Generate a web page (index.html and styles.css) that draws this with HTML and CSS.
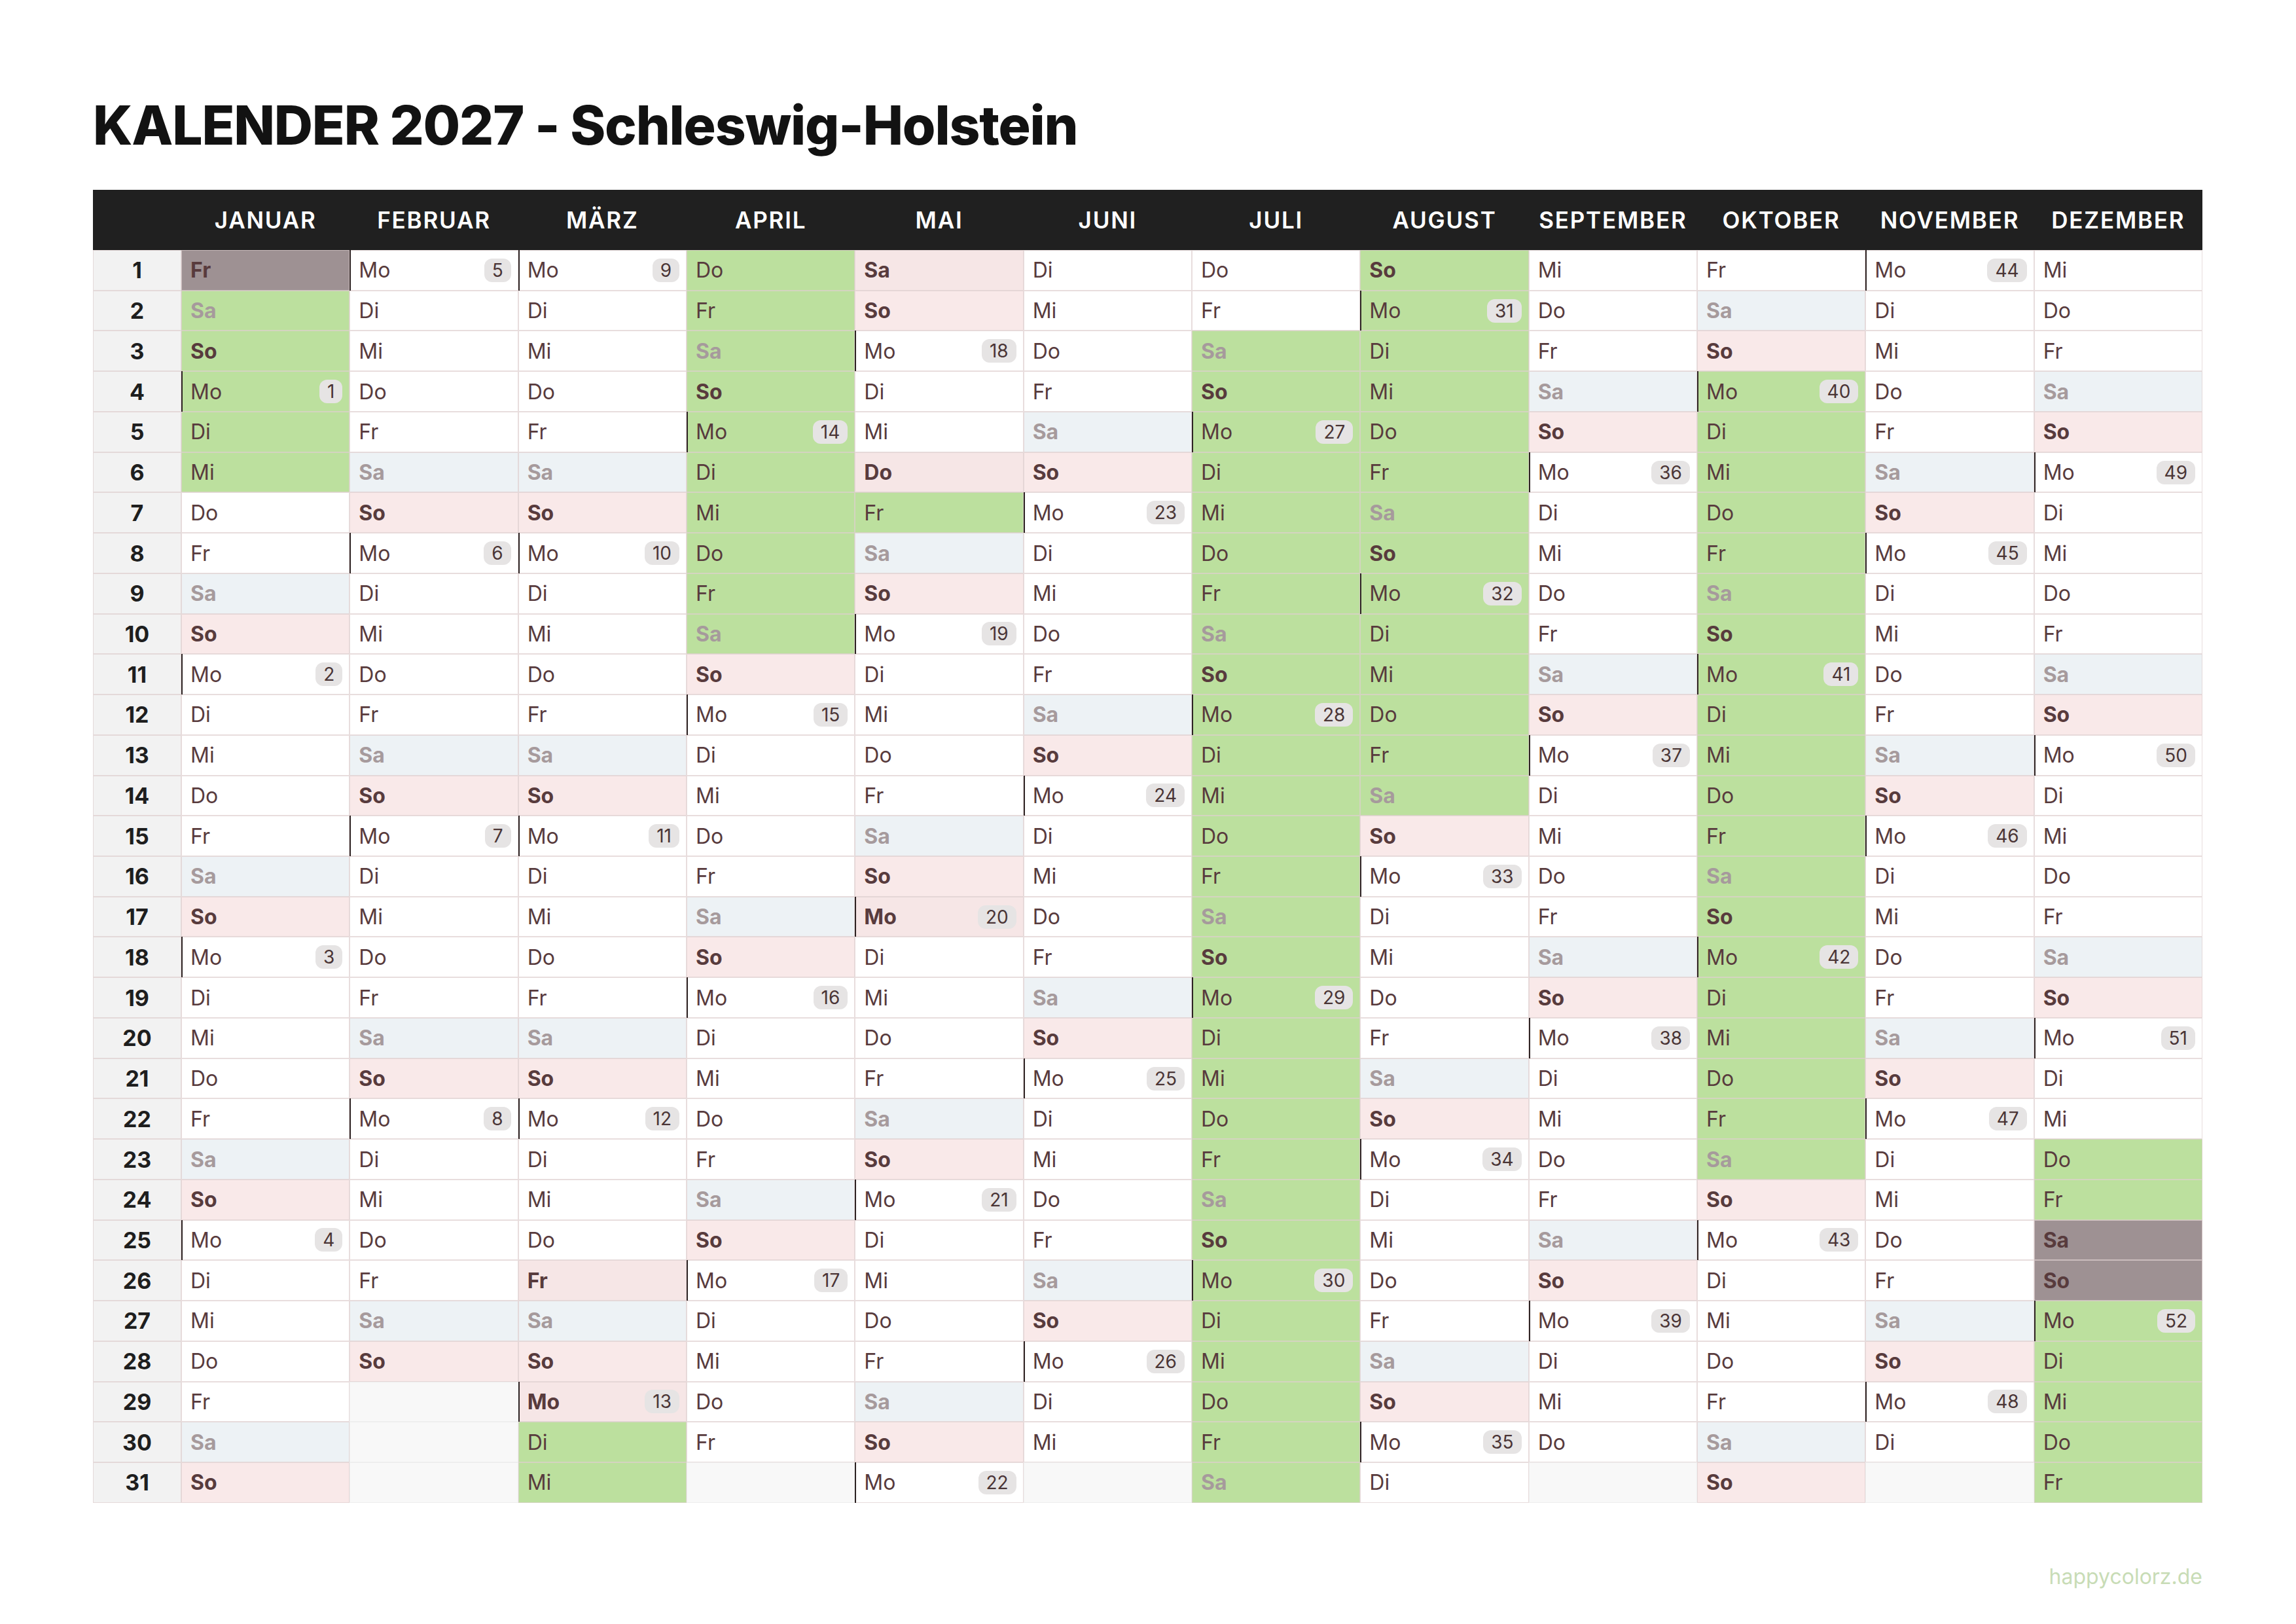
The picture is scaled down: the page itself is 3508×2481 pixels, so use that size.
FILE: index.html
```html
<!DOCTYPE html>
<html lang="de">
<head>
<meta charset="utf-8">
<title>Kalender 2027 - Schleswig-Holstein</title>
<link rel="stylesheet" href="styles.css">
</head>
<body>
<main class="page">
<h1 class="title">KALENDER 2027 - Schleswig-Holstein</h1>
<div class="cal">
<div class="h"></div>
<div class="n">1</div><div class="n">2</div><div class="n">3</div><div class="n">4</div><div class="n">5</div><div class="n">6</div><div class="n">7</div><div class="n">8</div><div class="n">9</div><div class="n">10</div><div class="n">11</div><div class="n">12</div><div class="n">13</div><div class="n">14</div><div class="n">15</div><div class="n">16</div><div class="n">17</div><div class="n">18</div><div class="n">19</div><div class="n">20</div><div class="n">21</div><div class="n">22</div><div class="n">23</div><div class="n">24</div><div class="n">25</div><div class="n">26</div><div class="n">27</div><div class="n">28</div><div class="n">29</div><div class="n">30</div><div class="n">31</div>

<div class="h">JANUAR</div>
<div class="c hf">Fr</div>
<div class="c fe sa">Sa</div>
<div class="c fe so">So</div>
<div class="c fe mo">Mo<span class="wk">1</span></div>
<div class="c fe">Di</div>
<div class="c fe">Mi</div>
<div class="c">Do</div>
<div class="c">Fr</div>
<div class="c sa">Sa</div>
<div class="c so">So</div>
<div class="c mo">Mo<span class="wk">2</span></div>
<div class="c">Di</div>
<div class="c">Mi</div>
<div class="c">Do</div>
<div class="c">Fr</div>
<div class="c sa">Sa</div>
<div class="c so">So</div>
<div class="c mo">Mo<span class="wk">3</span></div>
<div class="c">Di</div>
<div class="c">Mi</div>
<div class="c">Do</div>
<div class="c">Fr</div>
<div class="c sa">Sa</div>
<div class="c so">So</div>
<div class="c mo">Mo<span class="wk">4</span></div>
<div class="c">Di</div>
<div class="c">Mi</div>
<div class="c">Do</div>
<div class="c">Fr</div>
<div class="c sa">Sa</div>
<div class="c so">So</div>

<div class="h">FEBRUAR</div>
<div class="c mo">Mo<span class="wk">5</span></div>
<div class="c">Di</div>
<div class="c">Mi</div>
<div class="c">Do</div>
<div class="c">Fr</div>
<div class="c sa">Sa</div>
<div class="c so">So</div>
<div class="c mo">Mo<span class="wk">6</span></div>
<div class="c">Di</div>
<div class="c">Mi</div>
<div class="c">Do</div>
<div class="c">Fr</div>
<div class="c sa">Sa</div>
<div class="c so">So</div>
<div class="c mo">Mo<span class="wk">7</span></div>
<div class="c">Di</div>
<div class="c">Mi</div>
<div class="c">Do</div>
<div class="c">Fr</div>
<div class="c sa">Sa</div>
<div class="c so">So</div>
<div class="c mo">Mo<span class="wk">8</span></div>
<div class="c">Di</div>
<div class="c">Mi</div>
<div class="c">Do</div>
<div class="c">Fr</div>
<div class="c sa">Sa</div>
<div class="c so">So</div>
<div class="c e"></div>
<div class="c e"></div>
<div class="c e"></div>

<div class="h">MÄRZ</div>
<div class="c mo">Mo<span class="wk">9</span></div>
<div class="c">Di</div>
<div class="c">Mi</div>
<div class="c">Do</div>
<div class="c">Fr</div>
<div class="c sa">Sa</div>
<div class="c so">So</div>
<div class="c mo">Mo<span class="wk">10</span></div>
<div class="c">Di</div>
<div class="c">Mi</div>
<div class="c">Do</div>
<div class="c">Fr</div>
<div class="c sa">Sa</div>
<div class="c so">So</div>
<div class="c mo">Mo<span class="wk">11</span></div>
<div class="c">Di</div>
<div class="c">Mi</div>
<div class="c">Do</div>
<div class="c">Fr</div>
<div class="c sa">Sa</div>
<div class="c so">So</div>
<div class="c mo">Mo<span class="wk">12</span></div>
<div class="c">Di</div>
<div class="c">Mi</div>
<div class="c">Do</div>
<div class="c ho">Fr</div>
<div class="c sa">Sa</div>
<div class="c so">So</div>
<div class="c ho mo">Mo<span class="wk">13</span></div>
<div class="c fe">Di</div>
<div class="c fe">Mi</div>

<div class="h">APRIL</div>
<div class="c fe">Do</div>
<div class="c fe">Fr</div>
<div class="c fe sa">Sa</div>
<div class="c fe so">So</div>
<div class="c fe mo">Mo<span class="wk">14</span></div>
<div class="c fe">Di</div>
<div class="c fe">Mi</div>
<div class="c fe">Do</div>
<div class="c fe">Fr</div>
<div class="c fe sa">Sa</div>
<div class="c so">So</div>
<div class="c mo">Mo<span class="wk">15</span></div>
<div class="c">Di</div>
<div class="c">Mi</div>
<div class="c">Do</div>
<div class="c">Fr</div>
<div class="c sa">Sa</div>
<div class="c so">So</div>
<div class="c mo">Mo<span class="wk">16</span></div>
<div class="c">Di</div>
<div class="c">Mi</div>
<div class="c">Do</div>
<div class="c">Fr</div>
<div class="c sa">Sa</div>
<div class="c so">So</div>
<div class="c mo">Mo<span class="wk">17</span></div>
<div class="c">Di</div>
<div class="c">Mi</div>
<div class="c">Do</div>
<div class="c">Fr</div>
<div class="c e"></div>

<div class="h">MAI</div>
<div class="c ho">Sa</div>
<div class="c so">So</div>
<div class="c mo">Mo<span class="wk">18</span></div>
<div class="c">Di</div>
<div class="c">Mi</div>
<div class="c ho">Do</div>
<div class="c fe">Fr</div>
<div class="c sa">Sa</div>
<div class="c so">So</div>
<div class="c mo">Mo<span class="wk">19</span></div>
<div class="c">Di</div>
<div class="c">Mi</div>
<div class="c">Do</div>
<div class="c">Fr</div>
<div class="c sa">Sa</div>
<div class="c so">So</div>
<div class="c ho mo">Mo<span class="wk">20</span></div>
<div class="c">Di</div>
<div class="c">Mi</div>
<div class="c">Do</div>
<div class="c">Fr</div>
<div class="c sa">Sa</div>
<div class="c so">So</div>
<div class="c mo">Mo<span class="wk">21</span></div>
<div class="c">Di</div>
<div class="c">Mi</div>
<div class="c">Do</div>
<div class="c">Fr</div>
<div class="c sa">Sa</div>
<div class="c so">So</div>
<div class="c mo">Mo<span class="wk">22</span></div>

<div class="h">JUNI</div>
<div class="c">Di</div>
<div class="c">Mi</div>
<div class="c">Do</div>
<div class="c">Fr</div>
<div class="c sa">Sa</div>
<div class="c so">So</div>
<div class="c mo">Mo<span class="wk">23</span></div>
<div class="c">Di</div>
<div class="c">Mi</div>
<div class="c">Do</div>
<div class="c">Fr</div>
<div class="c sa">Sa</div>
<div class="c so">So</div>
<div class="c mo">Mo<span class="wk">24</span></div>
<div class="c">Di</div>
<div class="c">Mi</div>
<div class="c">Do</div>
<div class="c">Fr</div>
<div class="c sa">Sa</div>
<div class="c so">So</div>
<div class="c mo">Mo<span class="wk">25</span></div>
<div class="c">Di</div>
<div class="c">Mi</div>
<div class="c">Do</div>
<div class="c">Fr</div>
<div class="c sa">Sa</div>
<div class="c so">So</div>
<div class="c mo">Mo<span class="wk">26</span></div>
<div class="c">Di</div>
<div class="c">Mi</div>
<div class="c e"></div>

<div class="h">JULI</div>
<div class="c">Do</div>
<div class="c">Fr</div>
<div class="c fe sa">Sa</div>
<div class="c fe so">So</div>
<div class="c fe mo">Mo<span class="wk">27</span></div>
<div class="c fe">Di</div>
<div class="c fe">Mi</div>
<div class="c fe">Do</div>
<div class="c fe">Fr</div>
<div class="c fe sa">Sa</div>
<div class="c fe so">So</div>
<div class="c fe mo">Mo<span class="wk">28</span></div>
<div class="c fe">Di</div>
<div class="c fe">Mi</div>
<div class="c fe">Do</div>
<div class="c fe">Fr</div>
<div class="c fe sa">Sa</div>
<div class="c fe so">So</div>
<div class="c fe mo">Mo<span class="wk">29</span></div>
<div class="c fe">Di</div>
<div class="c fe">Mi</div>
<div class="c fe">Do</div>
<div class="c fe">Fr</div>
<div class="c fe sa">Sa</div>
<div class="c fe so">So</div>
<div class="c fe mo">Mo<span class="wk">30</span></div>
<div class="c fe">Di</div>
<div class="c fe">Mi</div>
<div class="c fe">Do</div>
<div class="c fe">Fr</div>
<div class="c fe sa">Sa</div>

<div class="h">AUGUST</div>
<div class="c fe so">So</div>
<div class="c fe mo">Mo<span class="wk">31</span></div>
<div class="c fe">Di</div>
<div class="c fe">Mi</div>
<div class="c fe">Do</div>
<div class="c fe">Fr</div>
<div class="c fe sa">Sa</div>
<div class="c fe so">So</div>
<div class="c fe mo">Mo<span class="wk">32</span></div>
<div class="c fe">Di</div>
<div class="c fe">Mi</div>
<div class="c fe">Do</div>
<div class="c fe">Fr</div>
<div class="c fe sa">Sa</div>
<div class="c so">So</div>
<div class="c mo">Mo<span class="wk">33</span></div>
<div class="c">Di</div>
<div class="c">Mi</div>
<div class="c">Do</div>
<div class="c">Fr</div>
<div class="c sa">Sa</div>
<div class="c so">So</div>
<div class="c mo">Mo<span class="wk">34</span></div>
<div class="c">Di</div>
<div class="c">Mi</div>
<div class="c">Do</div>
<div class="c">Fr</div>
<div class="c sa">Sa</div>
<div class="c so">So</div>
<div class="c mo">Mo<span class="wk">35</span></div>
<div class="c">Di</div>

<div class="h">SEPTEMBER</div>
<div class="c">Mi</div>
<div class="c">Do</div>
<div class="c">Fr</div>
<div class="c sa">Sa</div>
<div class="c so">So</div>
<div class="c mo">Mo<span class="wk">36</span></div>
<div class="c">Di</div>
<div class="c">Mi</div>
<div class="c">Do</div>
<div class="c">Fr</div>
<div class="c sa">Sa</div>
<div class="c so">So</div>
<div class="c mo">Mo<span class="wk">37</span></div>
<div class="c">Di</div>
<div class="c">Mi</div>
<div class="c">Do</div>
<div class="c">Fr</div>
<div class="c sa">Sa</div>
<div class="c so">So</div>
<div class="c mo">Mo<span class="wk">38</span></div>
<div class="c">Di</div>
<div class="c">Mi</div>
<div class="c">Do</div>
<div class="c">Fr</div>
<div class="c sa">Sa</div>
<div class="c so">So</div>
<div class="c mo">Mo<span class="wk">39</span></div>
<div class="c">Di</div>
<div class="c">Mi</div>
<div class="c">Do</div>
<div class="c e"></div>

<div class="h">OKTOBER</div>
<div class="c">Fr</div>
<div class="c sa">Sa</div>
<div class="c so">So</div>
<div class="c fe mo">Mo<span class="wk">40</span></div>
<div class="c fe">Di</div>
<div class="c fe">Mi</div>
<div class="c fe">Do</div>
<div class="c fe">Fr</div>
<div class="c fe sa">Sa</div>
<div class="c fe so">So</div>
<div class="c fe mo">Mo<span class="wk">41</span></div>
<div class="c fe">Di</div>
<div class="c fe">Mi</div>
<div class="c fe">Do</div>
<div class="c fe">Fr</div>
<div class="c fe sa">Sa</div>
<div class="c fe so">So</div>
<div class="c fe mo">Mo<span class="wk">42</span></div>
<div class="c fe">Di</div>
<div class="c fe">Mi</div>
<div class="c fe">Do</div>
<div class="c fe">Fr</div>
<div class="c fe sa">Sa</div>
<div class="c so">So</div>
<div class="c mo">Mo<span class="wk">43</span></div>
<div class="c">Di</div>
<div class="c">Mi</div>
<div class="c">Do</div>
<div class="c">Fr</div>
<div class="c sa">Sa</div>
<div class="c so">So</div>

<div class="h">NOVEMBER</div>
<div class="c mo">Mo<span class="wk">44</span></div>
<div class="c">Di</div>
<div class="c">Mi</div>
<div class="c">Do</div>
<div class="c">Fr</div>
<div class="c sa">Sa</div>
<div class="c so">So</div>
<div class="c mo">Mo<span class="wk">45</span></div>
<div class="c">Di</div>
<div class="c">Mi</div>
<div class="c">Do</div>
<div class="c">Fr</div>
<div class="c sa">Sa</div>
<div class="c so">So</div>
<div class="c mo">Mo<span class="wk">46</span></div>
<div class="c">Di</div>
<div class="c">Mi</div>
<div class="c">Do</div>
<div class="c">Fr</div>
<div class="c sa">Sa</div>
<div class="c so">So</div>
<div class="c mo">Mo<span class="wk">47</span></div>
<div class="c">Di</div>
<div class="c">Mi</div>
<div class="c">Do</div>
<div class="c">Fr</div>
<div class="c sa">Sa</div>
<div class="c so">So</div>
<div class="c mo">Mo<span class="wk">48</span></div>
<div class="c">Di</div>
<div class="c e"></div>

<div class="h">DEZEMBER</div>
<div class="c">Mi</div>
<div class="c">Do</div>
<div class="c">Fr</div>
<div class="c sa">Sa</div>
<div class="c so">So</div>
<div class="c mo">Mo<span class="wk">49</span></div>
<div class="c">Di</div>
<div class="c">Mi</div>
<div class="c">Do</div>
<div class="c">Fr</div>
<div class="c sa">Sa</div>
<div class="c so">So</div>
<div class="c mo">Mo<span class="wk">50</span></div>
<div class="c">Di</div>
<div class="c">Mi</div>
<div class="c">Do</div>
<div class="c">Fr</div>
<div class="c sa">Sa</div>
<div class="c so">So</div>
<div class="c mo">Mo<span class="wk">51</span></div>
<div class="c">Di</div>
<div class="c">Mi</div>
<div class="c fe">Do</div>
<div class="c fe">Fr</div>
<div class="c hf">Sa</div>
<div class="c hf">So</div>
<div class="c fe mo">Mo<span class="wk">52</span></div>
<div class="c fe">Di</div>
<div class="c fe">Mi</div>
<div class="c fe">Do</div>
<div class="c fe">Fr</div>
</div>
<footer class="brand">happycolorz.de</footer>
</main>
</body>
</html>
```

FILE: styles.css
```css
* { box-sizing: border-box; }
html, body { margin: 0; padding: 0; background: #ffffff; }
body { font-family: Inter, "Noto Sans", sans-serif; color: #583b3d; }

.page {
  width: 3508px;
  height: 2481px;
  padding: 151px 143px 0 142px;
  overflow: hidden;
}

.title {
  margin: 0 0 57px;
  font-size: 82px;
  line-height: 82px;
  font-weight: 800;
  letter-spacing: -1.2px;
  color: #121212;
}

.cal {
  display: grid;
  width: 3223px;
  grid-template-columns: 135px repeat(12, 1fr);
  grid-template-rows: 92px repeat(31, 61.74px);
  grid-auto-flow: column;
}

.h {
  background: #202020;
  color: #ffffff;
  display: flex;
  align-items: center;
  justify-content: center;
  font-size: 35px;
  font-weight: 600;
  letter-spacing: 1.8px;
}

.n {
  display: flex;
  align-items: center;
  justify-content: center;
  background: #f2f2f2;
  color: #1e1e1e;
  font-size: 34px;
  font-weight: 700;
  box-shadow: inset 0 0 0 1px rgba(222, 206, 206, 0.7);
}

.c {
  display: flex;
  align-items: center;
  justify-content: space-between;
  padding: 0 11px 0 14px;
  font-size: 32px;
  font-weight: 400;
  background: #ffffff;
  box-shadow: inset 0 0 0 1px rgba(222, 206, 206, 0.7);
}

.sa { background: #edf2f5; color: #a69a9c; font-weight: 700; }
.so { background: #f9e9e9; font-weight: 700; }
.fe { background: #bce09e; }
.ho { background: #f6e6e6; color: #583b3d; font-weight: 700; }
.hf { background: #9e9193; color: #583b3d; font-weight: 700; }
.e { background: #f8f8f8; box-shadow: inset 0 0 0 1px #eeeeee; }

.mo { box-shadow: inset 2px 0 0 #2e2424, inset 0 0 0 1px rgba(222, 206, 206, 0.7); }

.wk {
  height: 36px;
  line-height: 36px;
  padding: 0 12px;
  border-radius: 12px;
  background: #e6e4e4;
  color: #4a3536;
  font-size: 28px;
  font-weight: 400;
}

.brand {
  width: 3223px;
  margin-top: 93px;
  text-align: right;
  font-size: 32px;
  line-height: 40px;
  color: #c8dcb6;
}
```
